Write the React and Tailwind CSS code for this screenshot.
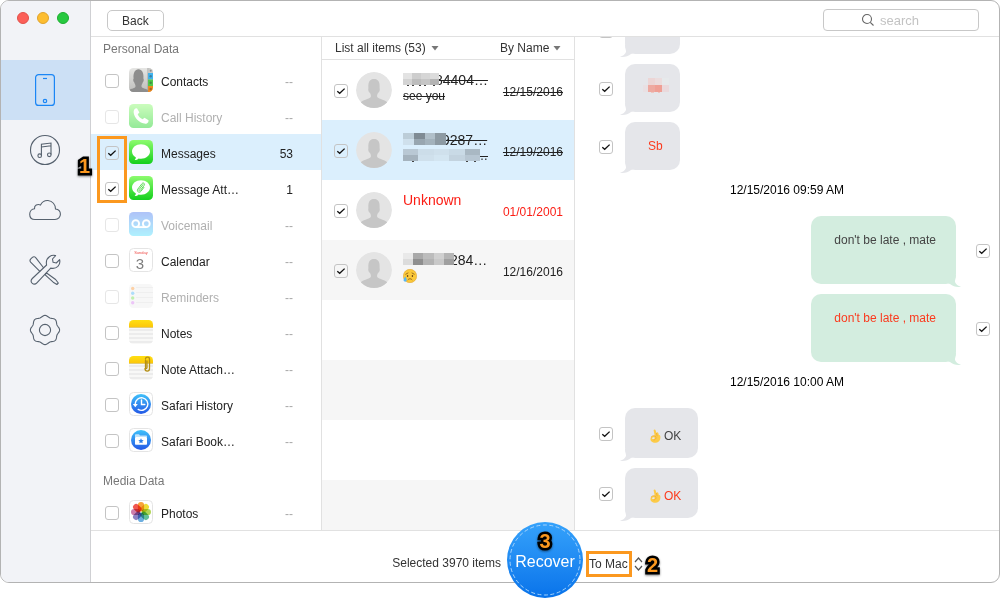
import React, { useState } from 'react';
import clsx from 'clsx';

const categories = [
  { id: 'contacts', label: 'Contacts', icon: ContactsIcon },
  { id: 'calls', label: 'Call History', icon: CallIcon, disabled: true },
  { id: 'messages', label: 'Messages', icon: MessagesIcon, count: 53, checked: true, active: true },
  { id: 'message-att', label: 'Message Att…', icon: MessageAttachIcon, count: 1, checked: true },
  { id: 'voicemail', label: 'Voicemail', icon: VoicemailIcon, disabled: true },
  { id: 'calendar', label: 'Calendar', icon: CalendarIcon },
  { id: 'reminders', label: 'Reminders', icon: RemindersIcon, disabled: true },
  { id: 'notes', label: 'Notes', icon: NotesIcon },
  { id: 'note-att', label: 'Note Attach…', icon: NoteAttachIcon },
  { id: 'history', label: 'Safari History', icon: HistoryIcon },
  { id: 'bookmarks', label: 'Safari Book…', icon: BookmarksIcon },
];

const media = [{ id: 'photos', label: 'Photos', icon: PhotosIcon }];

const threads = [
  {
    mask: { width: 36, rows: [['#e3e3e3', '#cdcdcd', '#d6d6d6', '#dcdcdc'], ['#d3d3d3', '#bdbdbd', '#c6c6c6', '#b4b4b4']], dots: [4, 9, 16, 21, 30] },
    name: '84404…',
    preview: 'see you',
    date: '12/15/2016',
    deleted: true,
  },
  {
    mask: { width: 43, rows: [['#bccdd8', '#7f8b94', '#b0bfc9', '#8d9aa3'], ['#cfe0ec', '#98a6b0', '#a3b2bc', '#8d9aa3']], dots: [] },
    name: '9287…',
    previewMask: { width: 77, rows: [['#b9c8d4', '#ccdde9', '#cfe0ec', '#c9dae6', '#a9b8c3'], ['#a5b3be', '#cfe0ec', '#d3e5f1', '#c3d3df', '#b7c6d2']], dots: [9, 63, 71] },
    preview: '…',
    date: '12/19/2016',
    deleted: true,
    active: true,
  },
  { name: 'Unknown', date: '01/01/2001', red: true },
  {
    mask: { width: 51, rows: [['#e9e9e9', '#a9a9a9', '#bcbcbc', '#d0d0d0', '#b5b5b5'], ['#dcdcdc', '#8f8f8f', '#b3b3b3', '#c9c9c9', '#a0a0a0']], dots: [] },
    name: '284…',
    emoji: true,
    date: '12/16/2016',
    shaded: true,
  },
];

const svgBase = { width: 24, height: 24, viewBox: '0 0 24 24', 'aria-hidden': true };

function ContactsIcon() {
  return (
    <svg {...svgBase}>
      <defs>
        <linearGradient id="contactBg" x1="0" y1="0" x2="0" y2="1">
          <stop offset="0" stopColor="#e6e6e4" />
          <stop offset="1" stopColor="#bdbdbb" />
        </linearGradient>
        <clipPath id="contactClip">
          <rect width="24" height="24" rx="4.5" />
        </clipPath>
      </defs>
      <g clipPath="url(#contactClip)">
        <rect width="24" height="24" fill="url(#contactBg)" />
        <path d="M0 24v-2c2.500-1.500 6-1.500 6.500-3.500.2-1.500-.7-2.300-1.200-4C4 13.500 4 11 4.600 10.500 4 5 6 1.200 9.500 1.200S15 5 14.400 10.500c.6.5.6 3-.7 4-.5 1.700-1.400 2.500-1.200 4 .5 2 4 2 6.500 3.500v2z" fill="#8d8d8d" />
        <rect x="19" width="5" height="5" fill="#c9c9c7" />
        <rect x="19" y="5" width="5" height="6.500" fill="#3fb3ee" />
        <rect x="19" y="11.500" width="5" height="6.500" fill="#4fc94b" />
        <rect x="19" y="18" width="5" height="6" fill="#f08a1c" />
        <path d="M18.700 0v24" stroke="#999" strokeWidth=".5" />
        <g fill="#333" opacity=".4">
          <circle cx="21.700" cy="2.800" r="1" />
          <circle cx="21.700" cy="8.300" r="1.200" />
          <circle cx="21.700" cy="14.700" r="1.200" />
          <circle cx="21.700" cy="21" r="1.200" />
        </g>
      </g>
    </svg>
  );
}

function GreenTile() {
  return (
    <>
      <defs>
        <linearGradient id="greenTile" x1="0" y1="0" x2="0" y2="1">
          <stop offset="0" stopColor="#8dfb6e" />
          <stop offset="1" stopColor="#14d01c" />
        </linearGradient>
      </defs>
      <rect width="24" height="24" rx="4.500" fill="url(#greenTile)" />
    </>
  );
}

function CallIcon() {
  return (
    <svg {...svgBase}>
      <GreenTile />
      <path d="M6.300 4.500 8 4.300l2.400 4.100-1.700 1.900c.8 2.200 2.600 4 4.900 5l1.900-1.600 4.100 2.500-.3 1.800c-.8 1.500-2.300 2-4.100 1.600C10 18.500 5.500 14 4.700 8.700c-.2-1.800.3-3.400 1.600-4.200z" fill="#fff" />
    </svg>
  );
}

function MessagesIcon() {
  return (
    <svg {...svgBase}>
      <GreenTile />
      <path d="M12 4.300c5 0 9 3.200 9 7.200s-4 7.200-9 7.200c-.8 0-1.600-.1-2.400-.3-1 1-2.300 1.600-4 1.600.7-.7 1.200-1.500 1.300-2.600C4.600 16.100 3 14 3 11.500c0-4 4-7.200 9-7.200z" fill="#fff" />
    </svg>
  );
}

function MessageAttachIcon() {
  return (
    <svg {...svgBase}>
      <GreenTile />
      <path d="M12 4.300c5 0 9 3.200 9 7.200s-4 7.200-9 7.200c-.8 0-1.600-.1-2.400-.3-1 1-2.300 1.600-4 1.600.7-.7 1.200-1.500 1.300-2.600C4.600 16.100 3 14 3 11.500c0-4 4-7.200 9-7.200z" fill="#fff" />
      <path d="m14 8.500-4 5.200c-.6.900.5 1.700 1.200.9l4-5.300c1.100-1.600-.9-3.200-2.200-1.700l-4.200 5.500c-1.500 2.300 1.400 4.400 3.100 2.300l3-4" fill="none" stroke="#5ddc55" strokeWidth="1" strokeLinecap="round" />
    </svg>
  );
}

function VoicemailIcon() {
  return (
    <svg {...svgBase}>
      <defs>
        <linearGradient id="vmBg" x1="0" y1="0" x2="0" y2="1">
          <stop offset="0" stopColor="#4f7bf0" />
          <stop offset="1" stopColor="#4fe0fd" />
        </linearGradient>
      </defs>
      <rect width="24" height="24" rx="4.500" fill="url(#vmBg)" />
      <g fill="none" stroke="#fff" strokeWidth="1.900">
        <circle cx="6.700" cy="11.700" r="3.400" />
        <circle cx="17.300" cy="11.700" r="3.400" />
        <path d="M6.700 15.100h10.600" />
      </g>
    </svg>
  );
}

function WhiteTile() {
  return <rect x=".5" y=".5" width="23" height="23" rx="4" fill="#fff" stroke="#e4e4e4" />;
}

function CalendarIcon() {
  return (
    <svg {...svgBase}>
      <WhiteTile />
      <text x="12" y="6" fontSize="4" textAnchor="middle" fill="#ee4a46" fontFamily="Liberation Sans, sans-serif">Sunday</text>
      <text x="11" y="20.500" fontSize="15" textAnchor="middle" fill="#7d7d7d" fontFamily="Liberation Sans, sans-serif">3</text>
    </svg>
  );
}

function RemindersIcon() {
  return (
    <svg {...svgBase}>
      <rect width="24" height="24" rx="4.500" fill="#efefef" />
      <path d="M7 3.500h17M7 8.500h17M7 13.500h17M7 18.500h17" stroke="#d8d8d8" strokeWidth=".8" />
      <circle cx="3.700" cy="4.500" r="1.700" fill="#fb9a3b" />
      <circle cx="3.700" cy="9.300" r="1.700" fill="#4db5f5" />
      <circle cx="3.700" cy="14" r="1.700" fill="#76dc4f" />
      <circle cx="3.700" cy="18.700" r="1.700" fill="#d67ff0" />
    </svg>
  );
}

function NotesArt() {
  return (
    <>
      <defs>
        <linearGradient id="noteTop" x1="0" y1="0" x2="0" y2="1">
          <stop offset="0" stopColor="#ffdf12" />
          <stop offset="1" stopColor="#fcc70a" />
        </linearGradient>
        <clipPath id="noteClip">
          <rect width="24" height="24" rx="4.500" />
        </clipPath>
      </defs>
      <g clipPath="url(#noteClip)">
        <rect width="24" height="24" fill="#f8f8f7" />
        <rect width="24" height="7" fill="url(#noteTop)" />
        <path d="M0 7.500h24" stroke="#d9b83a" strokeWidth=".7" />
        <path d="M0 10h24M0 14h24M0 18h24M0 22h24" stroke="#dedede" strokeWidth=".9" />
      </g>
    </>
  );
}

function NotesIcon() {
  return (
    <svg {...svgBase}>
      <NotesArt />
    </svg>
  );
}

function NoteAttachIcon() {
  return (
    <svg {...svgBase}>
      <NotesArt />
      <path d="M18 5v6.500c0 1.500-1.500 1.500-1.500 0V4.500M16 12.500C16 16 20.500 16 20.500 12.500V3c0-2.500-4-2.500-4 0" fill="none" stroke="#b58f14" strokeWidth="1.300" strokeLinecap="round" />
    </svg>
  );
}

function BlueDisc() {
  return (
    <>
      <defs>
        <linearGradient id="discBg" x1="0" y1="0" x2="0" y2="1">
          <stop offset="0" stopColor="#3fc1fa" />
          <stop offset="1" stopColor="#2458e6" />
        </linearGradient>
      </defs>
      <circle cx="12" cy="12" r="10" fill="url(#discBg)" />
    </>
  );
}

function HistoryIcon() {
  return (
    <svg {...svgBase}>
      <WhiteTile />
      <BlueDisc />
      <g fill="none" stroke="#fff" strokeWidth="1.400" strokeLinecap="round">
        <path d="M6.200 12a6.300 6.300 0 1 1 3 5.400" />
        <path d="M12.500 8v4.500h3.300" />
      </g>
      <path d="M3.800 12h5l-2.500 3.200z" fill="#fff" />
    </svg>
  );
}

function BookmarksIcon() {
  return (
    <svg {...svgBase}>
      <WhiteTile />
      <BlueDisc />
      <path d="M6 7.200c0-.6.400-1 1-1h3l1 1.300h6c.6 0 1 .4 1 1V9H6z" fill="#bfe3fb" />
      <rect x="6" y="9" width="12" height="7.800" rx=".8" fill="#fff" />
      <path d="m12 10.300.8 1.700 1.900.2-1.400 1.300.4 1.800-1.700-.9-1.700.9.400-1.800-1.400-1.300 1.900-.2z" fill="#2c7ee8" />
    </svg>
  );
}

function PhotosIcon() {
  const petals = ['#f8961e', '#ecd81b', '#a5cf3c', '#4cb88a', '#5aa4dc', '#7d72bb', '#c76a9f', '#ee4036'];
  return (
    <svg {...svgBase}>
      <WhiteTile />
      {petals.map((color, i) => (
        <rect key={color} x="8.900" y="2" width="6.200" height="9.300" rx="3.100" fill={color} opacity=".88" transform={`rotate(${i * 45} 12 12)`} className="mix-blend-multiply" />
      ))}
    </svg>
  );
}

function PhoneIcon() {
  return (
    <svg width="32" height="32" viewBox="0 0 32 32" fill="none" stroke="#1a86f5" strokeWidth="1.200" aria-hidden="true">
      <rect x="6.600" y=".6" width="18.800" height="30.800" rx="3" />
      <path d="M14 4.500h4" />
      <circle cx="16" cy="27" r="1.700" />
    </svg>
  );
}

function MusicIcon() {
  return (
    <svg width="32" height="32" viewBox="0 0 32 32" fill="none" stroke="#56616e" strokeWidth="1.100" aria-hidden="true">
      <circle cx="16" cy="16" r="14.500" />
      <path d="M12.400 21.500V10.200L22 9v11.500M12.400 13 22 11.800" />
      <circle cx="10.700" cy="21.700" r="1.800" />
      <circle cx="20.300" cy="20.800" r="1.800" />
    </svg>
  );
}

function CloudIcon() {
  return (
    <svg width="32" height="32" viewBox="0 0 32 32" fill="none" stroke="#56616e" strokeWidth="1.100" aria-hidden="true">
      <path d="M6 25.500C2.500 25.500.7 23 .7 20.200c0-3 2.300-5.200 4.800-5.500-.4-3.200 3-5.200 6-3.700C13 8 16 6.300 19 6.500c4.500.5 7.500 4 7.500 8.500 3 .3 4.900 2.500 4.900 5.300 0 2.700-2.100 5.200-5.400 5.200z" />
    </svg>
  );
}

function ToolsIcon() {
  return (
    <svg width="32" height="32" viewBox="0 0 32 32" fill="none" stroke="#56616e" strokeWidth="1.100" strokeLinejoin="round" aria-hidden="true">
      <path d="M17.600 11c-.7-3.400.2-6.500 2.800-8.300 2-1.400 4.400-1.600 6.200-1.100L23.500 5l.6 3.300 3.200.7 3.300-3.300c.6 2.500.1 4.900-1.700 6.700-2 1.900-4.400 2.400-7.200 1.700L7.900 28.800c-1.400 1.500-3.500 1.500-4.800.3-1.200-1.300-1.200-3.200.2-4.600z" />
      <path d="M14.700 14 6.900 3.900C6 2.600 4.500 2.400 3.400 3.400L1.800 4.900c-1 1-1 2.200-.2 3.200l9.500 9.500M17.600 19l9 6.500 2.700 3.500-1.400 1.500-3.700-2.300-8.300-7.600M16.300 20.300l1.300-1.300" />
    </svg>
  );
}

// scalloped outline with eight lobes
const gearPoints = Array.from({ length: 96 }, (_, i) => {
  const a = (i / 96) * Math.PI * 2;
  const r = 13.8 + Math.cos(a * 8) * 0.8;
  return `${(16 + r * Math.sin(a)).toFixed(2)},${(16 - r * Math.cos(a)).toFixed(2)}`;
}).join(' ');

function GearIcon() {
  return (
    <svg width="32" height="32" viewBox="0 0 32 32" fill="none" stroke="#56616e" strokeWidth="1.100" aria-hidden="true">
      <polygon points={gearPoints} strokeLinejoin="round" />
      <circle cx="16" cy="16" r="5.600" />
    </svg>
  );
}

const railItems = [
  { label: 'Device', icon: PhoneIcon, active: true },
  { label: 'iTunes', icon: MusicIcon },
  { label: 'iCloud', icon: CloudIcon },
  { label: 'Repair', icon: ToolsIcon },
  { label: 'Settings', icon: GearIcon },
];

function CheckBox({ id, label, defaultChecked, disabled }) {
  const [checked, setChecked] = useState(!!defaultChecked);

  return (
    <span className="relative mt-0.5 block size-3.5 shrink-0">
      <input
        id={id}
        type="checkbox"
        aria-label={label}
        checked={checked}
        disabled={disabled}
        onChange={() => setChecked(!checked)}
        className={clsx('block size-3.5 appearance-none rounded-[3px] border', disabled ? 'border-[#e6e6e6]' : 'border-[#c4c4c4]')}
      />
      {checked && (
        <svg className="pointer-events-none absolute inset-0" width="14" height="14" viewBox="0 0 14 14" fill="none" stroke="#111" strokeWidth="1.300" aria-hidden="true">
          <path d="m3.300 7.200 2.400 2.100 4.900-4.700" />
        </svg>
      )}
    </span>
  );
}

function Caret() {
  return (
    <svg width="8" height="5" viewBox="0 0 8 5" aria-hidden="true">
      <path d="M.5 0h7L4 4.500z" fill="#777" />
    </svg>
  );
}

function Mosaic({ width, rows, dots }) {
  const cell = width / rows[0].length;
  return (
    <svg className="relative -mr-1 shrink-0" width={width} height="14" viewBox={`0 0 ${width} 14`} shapeRendering="crispEdges" aria-hidden="true">
      {rows.map((row, y) =>
        row.map((color, x) => <rect key={`${x}-${y}`} x={x * cell} y={y * 6} width={cell} height="6" fill={color} />)
      )}
      {dots.map((x) => (
        <rect key={x} x={x} y="12" width="2" height="1" fill="#444" />
      ))}
    </svg>
  );
}

function Avatar() {
  return (
    <svg className="shrink-0" width="36" height="36" viewBox="0 0 36 36" aria-hidden="true">
      <defs>
        <clipPath id="avatarClip">
          <circle cx="18" cy="18" r="18" />
        </clipPath>
      </defs>
      <g clipPath="url(#avatarClip)">
        <circle cx="18" cy="18" r="18" fill="#e4e4e4" />
        <path d="M4.500 36v-5c1.500-3.500 8.500-3.500 10.300-6 .3-1.500 0-2.500-.8-4-1.800-1-2-3.300-1.600-5C12 9.500 14 7 18 7s6 2.500 5.600 9c.4 1.700.2 4-1.600 5-.8 1.500-1.100 2.500-.8 4 1.800 2.500 8.800 2.500 10.300 6v5z" fill="#c6c6c6" />
      </g>
    </svg>
  );
}

function SadEmoji() {
  return (
    <svg width="14" height="14" viewBox="0 0 14 14" role="img" aria-label="😥">
      <circle cx="7" cy="7" r="6.700" fill="#fbc93a" stroke="#dd9c25" strokeWidth=".5" />
      <path d="M2.800 5.200 5 4M11.200 5.200 9 4M5 10.700c1-1.400 3-1.400 4 0" fill="none" stroke="#7a4b12" strokeWidth=".7" strokeLinecap="round" />
      <ellipse cx="4.600" cy="6.900" rx=".7" ry="1" fill="#6b4413" />
      <ellipse cx="9.400" cy="6.900" rx=".7" ry="1" fill="#6b4413" />
      <path d="M2.200 7.500c1.200 1.700 1.700 2.800 1.500 4-.3 1.500-2.700 1.500-3.100.1-.2-1.300.6-2.500 1.600-4.100z" fill="#58b6ef" />
    </svg>
  );
}

function OkHand() {
  return (
    <svg width="14" height="14" viewBox="0 0 14 14" role="img" aria-label="👌">
      <path d="M5.600 1.300C5.900.2 7.300.2 7.600 1.300l.8 2.600c.3-.8 1.600-.9 1.900.1l.6 1.900c.7 0 1.300.4 1.400 1.200.5 3.500-.8 6.300-4.500 6.600-3.500.2-5.600-1.700-5.300-4 .2-1.800 1.800-3 4.200-3.100z" fill="#fccb48" />
      <path d="M4 9.300c.2-1.300 2.400-1.600 2.800-.5.100 1.200-2.200 2-2.800.5z" fill="#e6e7eb" />
      <path d="M3 8.100C4.300 6.300 7.500 6.200 8 8.200c.3 1.600-1 2.600-2.500 2.900M8.400 4l.8 3.200" fill="none" stroke="#e8a22a" strokeWidth=".6" />
    </svg>
  );
}

function CategoryRow({ item }) {
  const Icon = item.icon;
  return (
    <li className={clsx('flex h-9 items-center pr-7 pl-3.5', item.active && 'bg-[#dbeffd]')}>
      <CheckBox id={item.id} defaultChecked={item.checked} disabled={item.disabled} />
      <label htmlFor={item.id} className="ml-2.5 flex flex-1 items-center gap-2">
        <span className={clsx(item.disabled && 'opacity-45')}>
          <Icon />
        </span>
        <span className={clsx('pt-1', item.disabled ? 'text-[#b0b0b0]' : 'text-[#222]')}>{item.label}</span>
      </label>
      <span className={clsx('pt-1', item.count ? 'text-[#222]' : 'text-[#a8a8a8]')}>{item.count || '--'}</span>
    </li>
  );
}

function GroupTitle({ children }) {
  return <h2 className="h-9 px-3 pt-[15px] text-[#777]">{children}</h2>;
}

function ThreadRow({ thread }) {
  return (
    <li
      className={clsx(
        'flex h-15 items-center pr-[11px] pl-3',
        thread.active && 'bg-[#dbeffd]',
        thread.shaded && 'bg-[#f6f6f6]',
        thread.red ? 'text-[#fb1d14]' : 'text-[#222]'
      )}
    >
      <CheckBox label={thread.name} defaultChecked />
      <span className="ml-2">
        <Avatar />
      </span>
      <div className="ml-[11px] min-w-0 flex-1 pb-1">
        <div className="flex h-4 items-center text-sm leading-4">
          {thread.mask && <Mosaic {...thread.mask} />}
          <span className={clsx(thread.deleted && 'line-through')}>{thread.name}</span>
        </div>
        <div className="flex h-4 items-center leading-4">
          {thread.previewMask && <Mosaic {...thread.previewMask} />}
          {thread.emoji && <SadEmoji />}
          <span className={clsx(thread.deleted && 'line-through')}>{thread.preview}</span>
        </div>
      </div>
      <time className={clsx('pt-1', thread.deleted && 'line-through')}>{thread.date}</time>
    </li>
  );
}

function Tail({ mine }) {
  return (
    <svg
      className={clsx('absolute -bottom-[3px]', mine ? '-right-[5px] -scale-x-100 text-[#d3eddf]' : '-left-[5px] text-[#e5e6ea]')}
      width="14"
      height="12"
      viewBox="0 0 14 12"
      aria-hidden="true"
    >
      <path d="M5 0c0 3.500 1.200 5 1 7-.8 2.300-3 4-6 4.700 4 .6 8-.2 11-2.700l3-1V0z" fill="currentColor" />
    </svg>
  );
}

function Bubble({ mine, red, hand, label, children }) {
  return (
    <li className={clsx('flex items-center', mine ? 'flex-row-reverse pr-[9px]' : 'pl-6')}>
      <CheckBox label={label} defaultChecked />
      <div
        className={clsx(
          'relative leading-4',
          mine ? 'mr-5 h-17 rounded-[10px] bg-[#d3eddf] pt-4 pr-5 pl-[23px]' : 'ml-3 rounded-[10px] bg-[#e5e6ea] pr-[17px] pl-[23px]',
          !mine && (hand ? 'pt-5 pb-3.5' : 'py-4'),
          red ? 'text-[#fb3a1e]' : 'text-[#444]'
        )}
      >
        <Tail mine={mine} />
        <span className="relative flex items-center gap-0.5">
          {hand && <OkHand />}
          {children}
        </span>
      </div>
    </li>
  );
}

function Stamp({ children }) {
  return <li className="mb-1.5 text-center leading-5 text-black">{children}</li>;
}

function RedMosaic() {
  return (
    <svg className="overflow-visible" width="15" height="16" viewBox="0 0 15 16" shapeRendering="crispEdges" role="img" aria-label="hidden text">
      <rect x="0" y="-2" width="7" height="7" fill="#ecd5d5" />
      <rect x="7" y="-2" width="7" height="7" fill="#ebdcdd" />
      <rect x="14" y="-2" width="7" height="7" fill="#e6e9eb" />
      <rect x="-5" y="5" width="5" height="7" fill="#e9e0e3" />
      <rect x="0" y="5" width="7" height="7" fill="#eea9a0" />
      <rect x="7" y="5" width="7" height="7" fill="#ef9f95" />
      <rect x="14" y="5" width="7" height="7" fill="#ead9dc" />
      <rect x="3" y="12" width="3" height="1" fill="#edc5c0" />
      <rect x="10" y="12" width="2" height="1" fill="#edc5c0" />
    </svg>
  );
}

function StepNumber({ children, className }) {
  return (
    <span
      className={clsx(
        'pointer-events-none absolute text-xl leading-5 font-bold text-[#fb981f] [-webkit-text-stroke:5px_#000] [paint-order:stroke_fill] drop-shadow-[0_1px_1px_rgba(0,0,0,0.5)]',
        className
      )}
    >
      {children}
    </span>
  );
}

export default function App() {
  return (
    <div className="h-screen bg-white pb-[25px] font-['Liberation_Sans',Arial,sans-serif] text-xs text-[#333]">
      <div className="relative flex h-full rounded-[9px] border border-[#b3b3b3] bg-white">
        <nav className="flex w-[90px] shrink-0 flex-col rounded-l-lg border-r border-[#cfd0d3] bg-[#f2f3f7]">
          <div className="flex h-[59px] gap-2 pt-[11px] pl-4">
            <button aria-label="Close" className="size-3 rounded-full border border-[#e2504a] bg-[#fc5f58]" />
            <button aria-label="Minimize" className="size-3 rounded-full border border-[#e0a32c] bg-[#fdbd30]" />
            <button aria-label="Zoom" className="size-3 rounded-full border border-[#1dae30] bg-[#28c940]" />
          </div>
          {railItems.map(({ label, icon: Icon, active }) => (
            <button key={label} aria-label={label} className={clsx('flex h-15 items-center justify-center pr-0.5', active && 'bg-[#cce0f5]')}>
              <Icon />
            </button>
          ))}
        </nav>

        <div className="flex min-w-0 flex-1 flex-col">
          <header className="flex h-9 shrink-0 items-center justify-between border-b border-[#e1e1e1] pr-5 pl-4">
            <button className="mt-1 h-[21px] rounded-[5px] border border-[#c8c8c8] px-3.5 leading-4">Back</button>
            <label className="mt-0.5 flex h-[22px] w-[156px] items-center gap-1.5 rounded-[4px] border border-[#c8c8c8] pl-[37px]">
              <svg className="shrink-0" width="13" height="13" viewBox="0 0 13 13" fill="none" stroke="#666" strokeWidth="1.100" aria-hidden="true">
                <circle cx="6" cy="6" r="4.500" />
                <path d="m9.300 9.300 3.200 3.200" />
              </svg>
              <input type="search" placeholder="search" aria-label="search" className="w-full min-w-0 bg-transparent pt-0.5 text-[13px] leading-4 outline-none placeholder:text-[#c3c3c3]" />
            </label>
          </header>

          <div className="flex min-h-0 flex-1">
            <section className="w-[231px] shrink-0 overflow-hidden border-r border-[#e1e1e1]">
              <div className="-mt-[11px]">
                <GroupTitle>Personal Data</GroupTitle>
                <ul>
                  {categories.map((item) => (
                    <CategoryRow key={item.id} item={item} />
                  ))}
                </ul>
                <GroupTitle>Media Data</GroupTitle>
                <ul>
                  {media.map((item) => (
                    <CategoryRow key={item.id} item={item} />
                  ))}
                </ul>
              </div>
            </section>

            <section className="flex w-[253px] shrink-0 flex-col overflow-hidden border-r border-[#e1e1e1]">
              <div className="flex h-[23px] shrink-0 items-center justify-between border-b border-[#e1e1e1] pr-[13px] pl-[13px]">
                <span className="flex items-center gap-[5px]">
                  <select aria-label="Filter items" className="appearance-none bg-transparent">
                    <option>List all items (53)</option>
                  </select>
                  <Caret />
                </span>
                <span className="flex items-center gap-[3px]">
                  <select aria-label="Sort order" className="appearance-none bg-transparent">
                    <option>By Name</option>
                  </select>
                  <Caret />
                </span>
              </div>
              <ul className="shrink-0">
                {threads.map((thread) => (
                  <ThreadRow key={thread.date} thread={thread} />
                ))}
              </ul>
              {/* empty striped rows under the list */}
              <div className="flex-1 bg-[repeating-linear-gradient(to_bottom,#fff_0_60px,#f6f6f6_60px_120px)]" />
            </section>

            <section className="min-w-0 flex-1 overflow-hidden">
              <ul className="-mt-[31px] flex flex-col gap-2.5">
                <Bubble red label="Message 1">
                  <RedMosaic />
                </Bubble>
                <Bubble red label="Message 2">
                  <RedMosaic />
                </Bubble>
                <Bubble red label="Message 3">Sb</Bubble>
                <Stamp>12/15/2016 09:59 AM</Stamp>
                <Bubble mine label="Message 4">don't be late , mate</Bubble>
                <Bubble mine red label="Message 5">don't be late , mate</Bubble>
                <Stamp>12/15/2016 10:00 AM</Stamp>
                <Bubble hand label="Message 6">OK</Bubble>
                <Bubble hand red label="Message 7">OK</Bubble>
              </ul>
            </section>
          </div>

          <footer className="grid h-13 shrink-0 grid-cols-[1fr_76px_1fr] items-start border-t border-[#e1e1e1]">
            <p className="pt-6 pr-1.5 text-right leading-4">Selected 3970 items</p>
            <button className="relative -mt-[9px] flex size-19 items-center justify-center rounded-full bg-linear-to-b from-[#35a2fb] to-[#0873ea] text-base text-white">
              <svg className="absolute inset-0" width="76" height="76" viewBox="0 0 76 76" aria-hidden="true">
                <circle cx="38" cy="38" r="35" fill="none" stroke="#a8d4fb" strokeWidth="1" strokeDasharray="4 2.500" />
              </svg>
              <span className="pt-1">Recover</span>
              <StepNumber className="top-[9px]">3</StepNumber>
            </button>
            <div className="relative flex items-center gap-0.5 pt-5 pl-[3px]">
              <select aria-label="Destination" className="h-[26px] appearance-none border-3 border-[#fb981f] bg-transparent pr-px leading-4">
                <option>To Mac</option>
              </select>
              <svg width="9" height="16" viewBox="0 0 9 16" fill="none" stroke="#555" strokeWidth="1.200" aria-hidden="true">
                <path d="m1 6 3.500-4L8 6M1 10l3.500 4L8 10" />
              </svg>
              <StepNumber className="top-6 left-16">2</StepNumber>
            </div>
          </footer>
        </div>

        <div className="pointer-events-none absolute top-[135px] left-24 h-[67px] w-[30px] border-3 border-[#fb981f]" />
        <StepNumber className="top-[155px] left-[78px]">1</StepNumber>
      </div>
    </div>
  );
}
